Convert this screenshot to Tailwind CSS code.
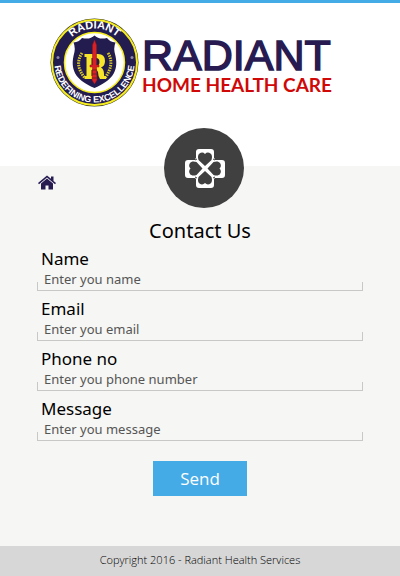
<!DOCTYPE html>
<html lang="en">
<head>
<meta charset="utf-8">
<meta name="viewport" content="width=device-width, initial-scale=1">
<title>Contact Us - Radiant Home Health Care</title>
<script src="https://cdn.jsdelivr.net/npm/@tailwindcss/browser@4"></script>
</head>
<body class="flex min-h-screen flex-col bg-[#f6f6f4] font-['Noto_Sans','Open_Sans',sans-serif] text-black">
<header class="relative flex justify-center border-t-3 border-[#44abe7] bg-white pt-3 pb-14">
  <svg class="h-[95px] w-[300px]" viewBox="50 15 300 95" role="img" aria-label="Radiant Home Health Care">
    <defs>
      <path id="arcTop" d="M60.500 62.500A34 34 0 0 1 128.500 62.500"/>
      <path id="arcBottom" d="M54.500 62.500A40 40 0 0 0 134.500 62.500"/>
    </defs>
    <circle cx="94.500" cy="62.500" r="44" fill="#37351f"/>
    <circle cx="94.500" cy="62.500" r="42.500" fill="#231c4f" stroke="#f6ed20" stroke-width="2"/>
    <circle cx="94.500" cy="62.500" r="30" fill="#fff" stroke="#f6ed20" stroke-width="1.500"/>
    <g fill="#fff" font-family="Liberation Sans, sans-serif" font-weight="700" text-anchor="middle">
      <text font-size="11"><textPath href="#arcTop" startOffset="50%">RADIANT</textPath></text>
      <text font-size="9"><textPath href="#arcBottom" startOffset="50%">REDEFINING EXCELLENCE</textPath></text>
    </g>
    <g fill="#8a86a5"><circle cx="58" cy="57.500" r="1.500"/><circle cx="132" cy="57.500" r="1.500"/></g>
    <path d="M94.500 35.500Q99 40 107 38Q110 42 115.500 42.500Q113 48 115.500 56C119 72 111 81 94.500 88C78 81 70 72 73.500 56Q76 48 73.500 42.500Q79 42 82 38Q90 40 94.500 35.500Z" fill="#231c4f"/>
    <g fill="none" stroke="#d9ca28" stroke-width="3" stroke-dasharray="1.500 1"><path d="M82 53Q74 65 85 78M108 53Q115 64 105 78"/></g>
    <path fill-rule="evenodd" d="M84.500 54H98Q105 54 105 61Q105 66 101 67.500Q104 69 104 74V76H106V79H100Q98 76 98 72Q97.500 70 95 70H91.500V76H94V79H84.500V76H86.500V57H84.500ZM91.500 58V66H96Q99.500 66 99.500 62Q99.500 58 96 58Z" fill="#f6e52a"/>
    <path d="M94.500 40L96.500 45V65H99V67H96.500L97 80L94.500 84L92 80L92.500 67H90V65H92.500V45Z" fill="#d92025" stroke="#8e1624" stroke-width=".5"/>
    <path d="M92 70H97M92 74H97M92 78H97" stroke="#78201f" stroke-width="1"/>
    <text x="142" y="70" font-family="Liberation Sans, sans-serif" font-size="43" fill="#271b52" stroke="#271b52" stroke-width="1.500">RADIANT</text>
    <text x="142" y="92" font-family="Lato, sans-serif" font-weight="700" font-size="19" fill="#cf0808">HOME HEALTH CARE</text>
  </svg>
  <div class="absolute -bottom-[42px] left-[51%] size-20 -translate-x-1/2">
    <svg class="size-20" viewBox="0 0 80 80" aria-hidden="true">
      <circle cx="40" cy="40" r="40" fill="#404040"/>
      <path d="M34 21H47Q50 21 50 24V31H32V24Q32 21 35 21ZM34 60H47Q50 60 50 57V50H32V57Q32 60 35 60ZM21 34V47Q21 50 24 50H31V32H24Q21 32 21 35ZM61 34V47Q61 50 58 50H51V32H58Q61 32 61 35Z" fill="#fff"/>
      <path d="M31 30.500H51V50.500H31Z" fill="#fff"/>
      <g fill="#404040">
        <path id="leaf" d="M41 38L34.500 32C33.500 29 34 26.500 35.500 25.500Q38.500 23.500 41 26Q43.500 23.500 46.500 25.500C48 26.500 48.500 29 47.500 32Z"/>
        <use href="#leaf" transform="rotate(90 41 40.500)"/>
        <use href="#leaf" transform="rotate(180 41 40.500)"/>
        <use href="#leaf" transform="rotate(270 41 40.500)"/>
      </g>
      <path d="M31 32L33 31M51 32L49 31M31 49L33 50M51 49L49 50" stroke="#404040" stroke-width="1"/>
    </svg>
  </div>
</header>
<main class="flex grow flex-col px-[37px] pt-2">
  <a href="#" aria-label="Home" class="w-5">
    <svg class="h-[18px] w-5" viewBox="0 0 20 18" fill="#271b52" aria-hidden="true">
      <path d="M10 1.500L1 9L2 10.200L10 3.600L18 10.200L19 9L16.500 6.900V2.500H14V4.800Z"/>
      <path d="M10 4.600L4 9.600V15.500H8.500V11.500H11.500V15.500H16V9.600Z"/>
    </svg>
  </a>
  <h1 class="mt-6 text-center text-xl leading-[30px]">Contact Us</h1>
  <form class="flex flex-col gap-[6px] pt-px">
    <div>
      <label for="name" class="block px-1 text-[17px] leading-6">Name</label>
      <div class="relative flex h-5 border-b border-[#c8c8c6] before:absolute before:bottom-0 before:left-0 before:h-2 before:w-px before:bg-[#c8c8c6] after:absolute after:right-0 after:bottom-0 after:h-2 after:w-px after:bg-[#c8c8c6]">
        <input id="name" type="text" placeholder="Enter you name" class="w-full bg-transparent px-[7px] pb-[3px] text-[13px] leading-4 outline-none placeholder:text-[#555]">
      </div>
    </div>
    <div>
      <label for="email" class="block px-1 text-[17px] leading-6">Email</label>
      <div class="relative flex h-5 border-b border-[#c8c8c6] before:absolute before:bottom-0 before:left-0 before:h-2 before:w-px before:bg-[#c8c8c6] after:absolute after:right-0 after:bottom-0 after:h-2 after:w-px after:bg-[#c8c8c6]">
        <input id="email" type="email" placeholder="Enter you email" class="w-full bg-transparent px-[7px] pb-[3px] text-[13px] leading-4 outline-none placeholder:text-[#555]">
      </div>
    </div>
    <div>
      <label for="phone" class="block px-1 text-[17px] leading-6">Phone no</label>
      <div class="relative flex h-5 border-b border-[#c8c8c6] before:absolute before:bottom-0 before:left-0 before:h-2 before:w-px before:bg-[#c8c8c6] after:absolute after:right-0 after:bottom-0 after:h-2 after:w-px after:bg-[#c8c8c6]">
        <input id="phone" type="tel" placeholder="Enter you phone number" class="w-full bg-transparent px-[7px] pb-[3px] text-[13px] leading-4 outline-none placeholder:text-[#555]">
      </div>
    </div>
    <div>
      <label for="message" class="block px-1 text-[17px] leading-6">Message</label>
      <div class="relative flex h-5 border-b border-[#c8c8c6] before:absolute before:bottom-0 before:left-0 before:h-2 before:w-px before:bg-[#c8c8c6] after:absolute after:right-0 after:bottom-0 after:h-2 after:w-px after:bg-[#c8c8c6]">
        <input id="message" type="text" placeholder="Enter you message" class="w-full bg-transparent px-[7px] pb-[3px] text-[13px] leading-4 outline-none placeholder:text-[#555]">
      </div>
    </div>
    <button type="submit" class="mt-[14px] self-center bg-[#44abe7] px-[27px] font-['Open_Sans','Noto_Sans',sans-serif] text-[17px] leading-[35px] font-medium text-white">Send</button>
  </form>
</main>
<footer class="bg-[#d7d7d7] pb-[2px] text-center font-['Open_Sans','Noto_Sans',sans-serif] text-[11px] leading-7 text-black font-light">Copyright 2016 - Radiant Health Services</footer>
</body>
</html>
